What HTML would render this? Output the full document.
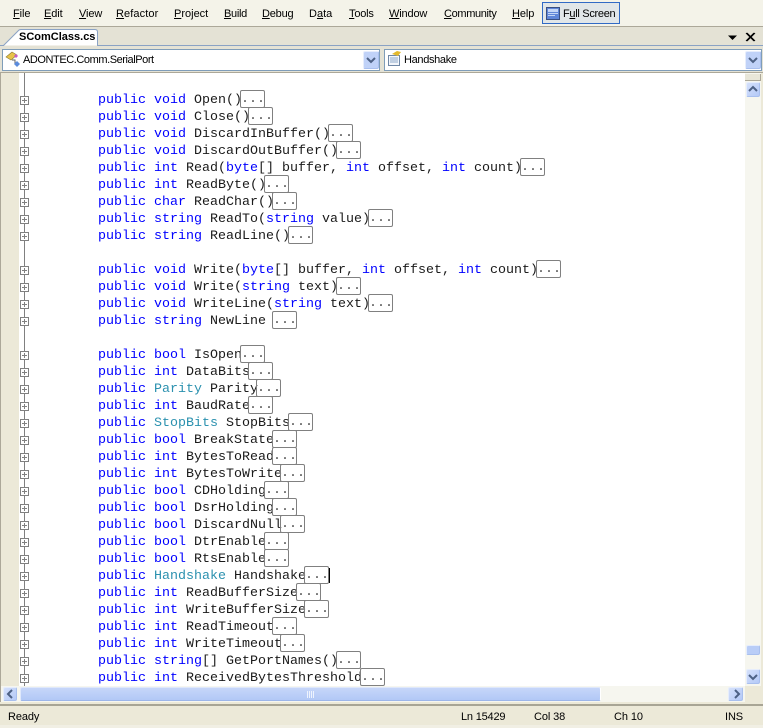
<!DOCTYPE html>
<html><head><meta charset="utf-8"><style>
html,body{margin:0;padding:0}
body{width:763px;height:728px;position:relative;overflow:hidden;background:#ece9d8;font-family:"Liberation Sans",sans-serif;font-size:11px;color:#000}
.a{position:absolute}
.m{position:absolute;top:8px;line-height:13px;white-space:pre;font-size:11px;color:#000;letter-spacing:-.1px}
.l{position:absolute;left:98px;height:17px;white-space:pre;font:13.33px/17px "Liberation Mono",monospace;color:#1a1a1a}
.l b{font-weight:normal;color:#0000ff}.l i{font-style:normal;color:#2b91af}
.e{display:inline-block;width:25px;height:18px;box-sizing:border-box;border:1px solid #808080;border-radius:2px;line-height:18px;text-align:left;vertical-align:top;margin-left:-2px;color:#555;position:relative;top:-2px}
.p{position:absolute;left:20px;width:9px;height:9px;box-sizing:border-box;border:1px solid #808080;background:#fff}
.p:before{content:"";position:absolute;left:1px;top:3px;width:5px;height:1px;background:#808080}
.p:after{content:"";position:absolute;left:3px;top:1px;width:1px;height:5px;background:#808080}
.btn{position:absolute;box-sizing:border-box;background:linear-gradient(135deg,#d4e0fb,#b4c9f7);border:1px solid #e6edfc;border-right-color:#a8bfee;border-bottom-color:#a8bfee;border-radius:2px}
svg{position:absolute;left:0;top:0}
</style></head><body>
<!-- menu bar -->
<div class="a" style="left:0;top:0;width:763px;height:26px;background:#f4f3e9"></div>
<div class="a" style="left:0;top:26px;width:763px;height:1px;background:#aca899"></div>
<div class="m" style="left:13px"><u>F</u>ile</div>
<div class="m" style="left:44px"><u>E</u>dit</div>
<div class="m" style="left:79px"><u>V</u>iew</div>
<div class="m" style="left:116px;letter-spacing:.1px"><u>R</u>efactor</div>
<div class="m" style="left:174px;letter-spacing:0"><u>P</u>roject</div>
<div class="m" style="left:224px;letter-spacing:-.3px"><u>B</u>uild</div>
<div class="m" style="left:262px;letter-spacing:-.2px"><u>D</u>ebug</div>
<div class="m" style="left:309px;letter-spacing:0">D<u>a</u>ta</div>
<div class="m" style="left:349px;letter-spacing:-.2px"><u>T</u>ools</div>
<div class="m" style="left:389px;letter-spacing:-.15px"><u>W</u>indow</div>
<div class="m" style="left:444px;letter-spacing:-.35px"><u>C</u>ommunity</div>
<div class="m" style="left:512px;letter-spacing:-.1px"><u>H</u>elp</div>
<div class="a" style="left:542px;top:2px;width:78px;height:22px;box-sizing:border-box;border:1px solid #316ac5;background:#e1e6e8"></div>
<svg width="763" height="728" style="z-index:3">
<rect x="546.500" y="7.500" width="13" height="12" fill="#5f86d8" stroke="#3a4f80"/>
<rect x="548" y="9" width="10" height="3" fill="#c4d6f6"/><rect x="548" y="13" width="10" height="1" fill="#c4d6f6"/><rect x="548" y="15" width="7" height="1" fill="#c4d6f6"/>
</svg>
<div class="m" style="left:563px;letter-spacing:-.3px;z-index:4">F<u>u</u>ll Screen</div>
<!-- tab strip -->
<div class="a" style="left:0;top:27px;width:763px;height:19px;background:#e4e2d5"></div>
<svg width="763" height="728" style="z-index:2">
<path d="M3.500 45.500 L18 31 Q19 29.500 21 29.500 L95 29.500 Q97.500 29.500 97.500 32 L97.500 45.500" fill="#fff" stroke="#8aa2c4"/>
<path d="M0 45.500H4M97 45.500H763" stroke="#8aa2c4"/>
<path d="M728 35.500h9l-4.500 4.500z" fill="#000"/>
<path d="M746 33l8 8M754 33l-8 8M747 33l8 8M755 33l-8 8" stroke="#000" stroke-width="1" fill="none"/>
</svg>
<div class="a" style="left:19px;top:30px;font-size:11px;font-weight:bold;line-height:15px;z-index:4;white-space:pre">SComClass.cs</div>
<!-- nav bar -->
<div class="a" style="left:0;top:46px;width:763px;height:27px;background:#e4e2d5"></div>
<div class="a" style="left:2px;top:49px;width:378px;height:22px;box-sizing:border-box;border:1px solid #7f9db9;background:#fff;line-height:21px;padding-left:20px;font-size:11px;letter-spacing:-.43px">ADONTEC.Comm.SerialPort</div>
<div class="a" style="left:384px;top:49px;width:378px;height:22px;box-sizing:border-box;border:1px solid #7f9db9;background:#fff;line-height:21px;padding-left:19px;font-size:11px;letter-spacing:-.33px">Handshake</div>
<div class="btn" style="left:363px;top:51px;width:16px;height:18px;background:#c0d2f8"></div>
<div class="btn" style="left:745px;top:51px;width:16px;height:18px;background:#c0d2f8"></div>
<svg width="763" height="728" style="z-index:3">
<path d="M367 58l4 4 4-4M749 58l4 4 4-4" fill="none" stroke="#4d6185" stroke-width="2"/>
<path d="M6 57l6-5 5 3-6 5z" fill="#e8c24a" stroke="#8a7a30" stroke-width=".6"/>
<path d="M14 56l2-2 2 2-2 2z" fill="#c45cc4"/>
<path d="M12 60h3v4" fill="none" stroke="#666"/>
<path d="M14 64l3-3 3 3-3 3z" fill="#5b8bdc"/>
<rect x="388.500" y="55.500" width="11" height="10" fill="#f3f6fb" stroke="#6f87a6"/>
<path d="M390 58h8M390 60h8M390 62h8" stroke="#8ea8c8"/>
<path d="M392 54l5-3 4 1-3 4z" fill="#e3b92c"/>
</svg>
<div class="a" style="left:0;top:71px;width:763px;height:2px;background:#e4e2d5"></div>
<div class="a" style="left:0;top:72px;width:763px;height:1px;background:#aca899"></div>
<!-- editor -->
<div class="a" style="left:0;top:73px;width:1px;height:631px;background:#aca899"></div>
<div class="a" style="left:1px;top:73px;width:18px;height:613px;background:#ece9d8"></div>
<div class="a" style="left:19px;top:73px;width:726px;height:613px;background:#fff"></div>
<div class="a" style="left:24px;top:73px;width:1px;height:613px;background:#808080"></div>
<div id="code">
<div class="l" style="top:92px"><b>public</b> <b>void</b> Open()<span class="e">...</span></div>
<div class="l" style="top:109px"><b>public</b> <b>void</b> Close()<span class="e">...</span></div>
<div class="l" style="top:126px"><b>public</b> <b>void</b> DiscardInBuffer()<span class="e">...</span></div>
<div class="l" style="top:143px"><b>public</b> <b>void</b> DiscardOutBuffer()<span class="e">...</span></div>
<div class="l" style="top:160px"><b>public</b> <b>int</b> Read(<b>byte</b>[] buffer, <b>int</b> offset, <b>int</b> count)<span class="e">...</span></div>
<div class="l" style="top:177px"><b>public</b> <b>int</b> ReadByte()<span class="e">...</span></div>
<div class="l" style="top:194px"><b>public</b> <b>char</b> ReadChar()<span class="e">...</span></div>
<div class="l" style="top:211px"><b>public</b> <b>string</b> ReadTo(<b>string</b> value)<span class="e">...</span></div>
<div class="l" style="top:228px"><b>public</b> <b>string</b> ReadLine()<span class="e">...</span></div>
<div class="l" style="top:262px"><b>public</b> <b>void</b> Write(<b>byte</b>[] buffer, <b>int</b> offset, <b>int</b> count)<span class="e">...</span></div>
<div class="l" style="top:279px"><b>public</b> <b>void</b> Write(<b>string</b> text)<span class="e">...</span></div>
<div class="l" style="top:296px"><b>public</b> <b>void</b> WriteLine(<b>string</b> text)<span class="e">...</span></div>
<div class="l" style="top:313px"><b>public</b> <b>string</b> NewLine <span class="e">...</span></div>
<div class="l" style="top:347px"><b>public</b> <b>bool</b> IsOpen<span class="e">...</span></div>
<div class="l" style="top:364px"><b>public</b> <b>int</b> DataBits<span class="e">...</span></div>
<div class="l" style="top:381px"><b>public</b> <i>Parity</i> Parity<span class="e">...</span></div>
<div class="l" style="top:398px"><b>public</b> <b>int</b> BaudRate<span class="e">...</span></div>
<div class="l" style="top:415px"><b>public</b> <i>StopBits</i> StopBits<span class="e">...</span></div>
<div class="l" style="top:432px"><b>public</b> <b>bool</b> BreakState<span class="e">...</span></div>
<div class="l" style="top:449px"><b>public</b> <b>int</b> BytesToRead<span class="e">...</span></div>
<div class="l" style="top:466px"><b>public</b> <b>int</b> BytesToWrite<span class="e">...</span></div>
<div class="l" style="top:483px"><b>public</b> <b>bool</b> CDHolding<span class="e">...</span></div>
<div class="l" style="top:500px"><b>public</b> <b>bool</b> DsrHolding<span class="e">...</span></div>
<div class="l" style="top:517px"><b>public</b> <b>bool</b> DiscardNull<span class="e">...</span></div>
<div class="l" style="top:534px"><b>public</b> <b>bool</b> DtrEnable<span class="e">...</span></div>
<div class="l" style="top:551px"><b>public</b> <b>bool</b> RtsEnable<span class="e">...</span></div>
<div class="l" style="top:568px"><b>public</b> <i>Handshake</i> Handshake<span class="e">...</span></div>
<div class="l" style="top:585px"><b>public</b> <b>int</b> ReadBufferSize<span class="e">...</span></div>
<div class="l" style="top:602px"><b>public</b> <b>int</b> WriteBufferSize<span class="e">...</span></div>
<div class="l" style="top:619px"><b>public</b> <b>int</b> ReadTimeout<span class="e">...</span></div>
<div class="l" style="top:636px"><b>public</b> <b>int</b> WriteTimeout<span class="e">...</span></div>
<div class="l" style="top:653px"><b>public</b> <b>string</b>[] GetPortNames()<span class="e">...</span></div>
<div class="l" style="top:670px"><b>public</b> <b>int</b> ReceivedBytesThreshold<span class="e">...</span></div>
</div>
<div class="a" style="left:329px;top:568px;width:1px;height:15px;background:#000"></div>
<div class="p" style="top:96px"></div><div class="p" style="top:113px"></div><div class="p" style="top:130px"></div><div class="p" style="top:147px"></div><div class="p" style="top:164px"></div><div class="p" style="top:181px"></div><div class="p" style="top:198px"></div><div class="p" style="top:215px"></div><div class="p" style="top:232px"></div>
<div class="p" style="top:266px"></div><div class="p" style="top:283px"></div><div class="p" style="top:300px"></div><div class="p" style="top:317px"></div>
<div class="p" style="top:351px"></div><div class="p" style="top:368px"></div><div class="p" style="top:385px"></div><div class="p" style="top:402px"></div><div class="p" style="top:419px"></div><div class="p" style="top:436px"></div><div class="p" style="top:453px"></div><div class="p" style="top:470px"></div><div class="p" style="top:487px"></div><div class="p" style="top:504px"></div><div class="p" style="top:521px"></div><div class="p" style="top:538px"></div><div class="p" style="top:555px"></div><div class="p" style="top:572px"></div><div class="p" style="top:589px"></div><div class="p" style="top:606px"></div><div class="p" style="top:623px"></div><div class="p" style="top:640px"></div><div class="p" style="top:657px"></div><div class="p" style="top:674px"></div>
<!-- vertical scrollbar -->
<div class="a" style="left:745px;top:73px;width:16px;height:613px;background:#f6f6ef"></div>
<div class="a" style="left:745px;top:74px;width:16px;height:7px;background:#e8e6d8;border-bottom:1px solid #aca899;border-right:1px solid #aca899;box-sizing:border-box"></div>
<div class="btn" style="left:746px;top:82px;width:14px;height:15px"></div>
<div class="btn" style="left:746px;top:645px;width:14px;height:10px;background:#b9cdf7"></div>
<div class="btn" style="left:746px;top:669px;width:14px;height:15px"></div>
<!-- horizontal scrollbar -->
<div class="a" style="left:1px;top:686px;width:744px;height:16px;background:#f6f6ef"></div>
<div class="a" style="left:745px;top:686px;width:16px;height:16px;background:#ece9d8"></div>
<div class="a" style="left:761px;top:73px;width:2px;height:631px;background:#ece9d8"></div>
<div class="btn" style="left:3px;top:687px;width:14px;height:14px"></div>
<div class="a" style="left:20px;top:687px;width:581px;height:14px;box-sizing:border-box;background:linear-gradient(#c6d6f9,#b2c8f6);border:1px solid #dfe8fb;border-bottom-color:#9db6ea;border-right-color:#fff;border-radius:2px"></div>
<div class="btn" style="left:728px;top:687px;width:15px;height:14px"></div>
<svg width="763" height="728" style="z-index:3">
<path d="M749 91l4-4 4 4M749 675l4 4 4-4M12 690l-4 4 4 4M735 690l4 4-4 4" fill="none" stroke="#4d6185" stroke-width="2"/>
<path d="M307.500 691v7M309.500 691v7M311.500 691v7M313.500 691v7" stroke="#eef3fd"/>
</svg>
<!-- status bar -->
<div class="a" style="left:0;top:702px;width:763px;height:2px;background:#ece9d8"></div>
<div class="a" style="left:0;top:704px;width:763px;height:2px;background:#a8a595"></div>
<div class="a" style="left:0;top:706px;width:763px;height:22px;background:#ece9d8"></div>
<div class="a" style="left:0;top:725px;width:763px;height:3px;background:#f1efe4"></div>
<div class="m" style="left:8px;top:711px">Ready</div>
<div class="m" style="left:461px;top:711px;letter-spacing:-.2px">Ln 15429</div>
<div class="m" style="left:534px;top:711px">Col 38</div>
<div class="m" style="left:614px;top:711px">Ch 10</div>
<div class="m" style="left:725px;top:711px">INS</div>
</body></html>
